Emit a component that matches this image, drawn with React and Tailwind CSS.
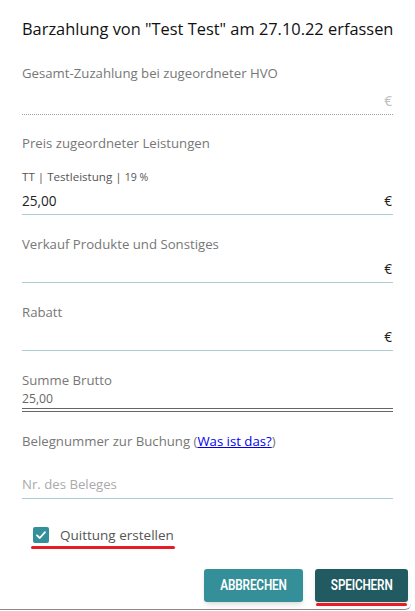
import React from 'react';

const Row = ({ children, euro = '€', euroClass = 'text-[#222]', lineClass = 'border-[#a9cdd3]', className = '' }) => (
  <div className={`flex items-center justify-between h-[27px] border-b ${lineClass} ${className}`}>
    <span className="text-[13.6px] text-[#222]">{children}</span>
    <span className={`text-[13.6px] pr-[1px] ${euroClass}`}>{euro}</span>
  </div>
);

const Label = ({ children, className = '' }) => (
  <div className={`text-[13.2px] leading-[20px] text-[#777] ${className}`}>{children}</div>
);

export default function App() {
  return (
    <div className="w-[415px] h-[611px] bg-white overflow-hidden font-['Open_Sans',sans-serif]">
      <div className="w-[411px] h-[610px] border-b border-[#8a8a8a] rounded-br-[6px]">
        <div className="pl-[22px] pr-[22px] w-[415px] pt-[17px] flex flex-col">
          <h1 className="text-[16.4px] leading-[24px] text-[#111] whitespace-nowrap">
            Barzahlung von "Test Test" am 27.10.22 erfassen
          </h1>

          <Label className="mt-[22px]">Gesamt-Zuzahlung bei zugeordneter HVO</Label>
          <Row className="mt-[5px]" euroClass="text-[#bdbdbd]" lineClass="border-dotted border-[#a0a0a0]" />

          <Label className="mt-[18px]">Preis zugeordneter Leistungen</Label>
          <div className="mt-[15px] text-[11.6px] leading-[18px] text-[#555]">
            TT | Testleistung | <span className="text-[10.6px]">19 %</span>
          </div>
          <Row className="mt-[2px]">25,00</Row>

          <Label className="mt-[19px]">Verkauf Produkte und Sonstiges</Label>
          <Row className="mt-[2px]" />

          <Label className="mt-[19px]">Rabatt</Label>
          <Row className="mt-[2px]" />

          <Label className="mt-[19px]">Summe Brutto</Label>
          <div className="text-[12.2px] leading-[18px] text-[#666] border-b-[4px] border-double border-[#666]">
            25,00
          </div>

          <Label className="mt-[19px]">
            Belegnummer zur Buchung (
            <a href="#" className="text-[#0000ee] underline">Was ist das?</a>)
          </Label>
          <div className="mt-[21px] flex items-center h-[27px] border-b border-[#a9cdd3]">
            <span className="text-[13.2px] text-[#aaa]">Nr. des Beleges</span>
          </div>

          <label className="mt-[26px] ml-[11px] flex items-center h-[20px] gap-[11px]">
            <span className="w-[16px] h-[16px] rounded-[2px] bg-[#338f99] flex items-center justify-center">
              <svg width="12" height="12" viewBox="0 0 12 12" fill="none">
                <path d="M2 6.3 L4.8 9 L10 3.2" stroke="white" strokeWidth="1.8" strokeLinecap="round" strokeLinejoin="round" />
              </svg>
            </span>
            <span className="text-[13.5px] text-[#555]">Quittung erstellen</span>
          </label>
          <div className="mt-[1px] ml-[9px] w-[144px] h-[3px] rounded-full bg-[#e31e24]" />

          <div className="mt-[20px] mr-[-15px] flex justify-end gap-[12px]">
            <button className="w-[99px] h-[33px] rounded-[3px] bg-[#358f99] text-white text-[14px] font-semibold shadow-md font-['Roboto',sans-serif]">
              <span className="inline-block scale-x-[0.84] tracking-[-0.2px]">ABBRECHEN</span>
            </button>
            <button className="w-[93px] h-[33px] rounded-[3px] bg-[#215a61] text-white text-[14px] font-semibold shadow-md font-['Roboto',sans-serif]">
              <span className="inline-block scale-x-[0.84] tracking-[-0.2px]">SPEICHERN</span>
            </button>
          </div>
          <div className="mt-[1px] mr-[-14px] self-end w-[91px] h-[3px] rounded-full bg-[#e31e24]" />
        </div>
      </div>
    </div>
  );
}
